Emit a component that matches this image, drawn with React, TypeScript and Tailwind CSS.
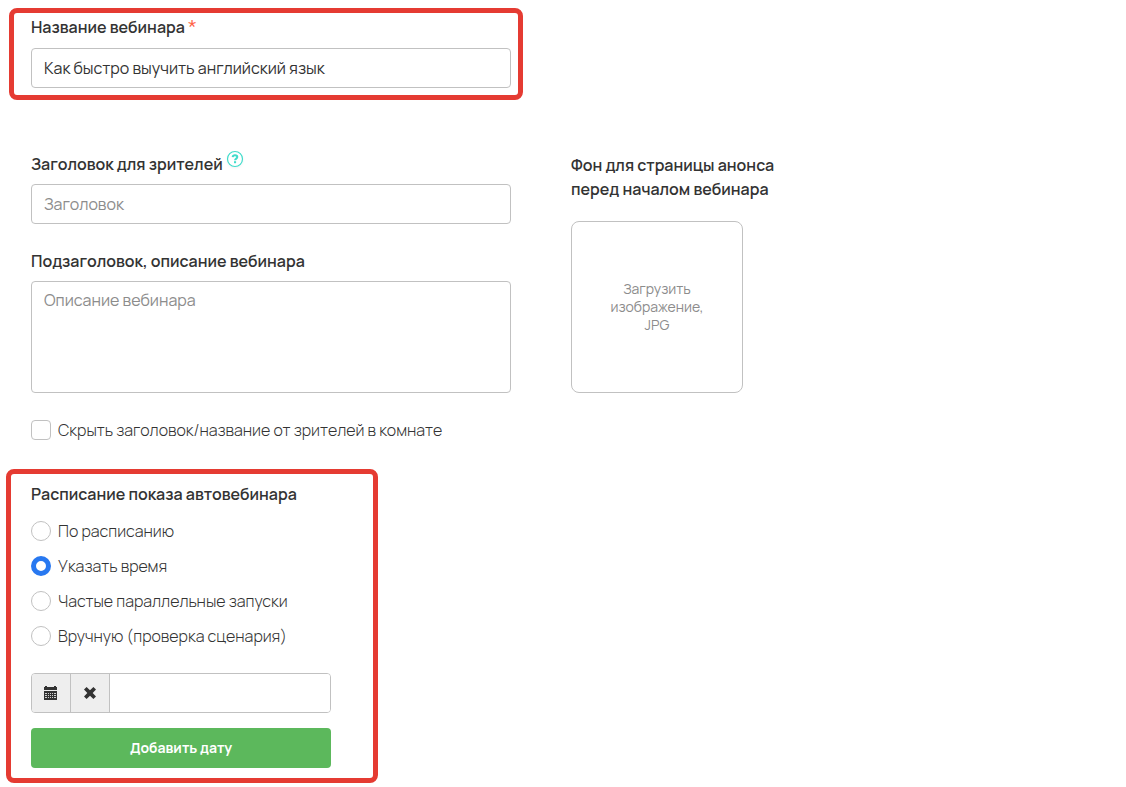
import { useState } from "react";

const fieldClass =
  "block w-full rounded border border-[#c1c1c1] bg-white px-3 text-base font-normal text-[#333] placeholder:text-[#8c8c8c] placeholder:opacity-100";
const labelClass = "text-base leading-6 font-semibold text-[#333]";

const modes = [
  "По расписанию",
  "Указать время",
  "Частые параллельные запуски",
  "Вручную (проверка сценария)",
];

function CalendarIcon() {
  return (
    <svg width="14" height="14" viewBox="0 0 14 14" aria-hidden="true" shapeRendering="crispEdges">
      <path fill="#333" d="M0 1h1V0h2v1h7V0h2v1h1v3H0zM0 5h13v9H0z" />
      <path
        fill="#d0d0d0"
        d="M1 7h2v1H1zM4 7h1v1H4zM6 7h1v1H6zM8 7h1v1H8zM10 7h2v1h-2zM1 9h2v1H1zM4 9h1v1H4zM6 9h1v1H6zM8 9h1v1H8zM10 9h2v1h-2zM1 11h2v1H1zM4 11h1v1H4zM6 11h1v1H6zM8 11h1v1H8zM10 11h2v1h-2z"
      />
    </svg>
  );
}

function RemoveIcon() {
  return (
    <svg width="14" height="14" viewBox="0 0 14 14" aria-hidden="true">
      <path
        fill="#333"
        d="M3.6 1 7 4.3 10.4 1 13 3.5 9.7 7l3.3 3.5-2.6 2.5L7 9.7 3.6 13 1 10.5 4.3 7 1 3.5z"
      />
    </svg>
  );
}

function HelpIcon() {
  return (
    <svg width="18" height="18" viewBox="0 0 18 18" fill="none" aria-hidden="true" className="drop-shadow-xs">
      <circle cx="9" cy="9" r="7.5" fill="#fff" stroke="#40dccb" strokeWidth="1.2" />
      <path d="M6.7 7.2C6.8 5.9 7.7 5.3 9 5.3c1.4 0 2.3.7 2.3 1.8 0 1.5-2.2 1.5-2.2 3.2" stroke="#40dccb" strokeWidth="2" />
      <path d="M8 11.2h2.1v2H8z" fill="#40dccb" />
    </svg>
  );
}

export default function App() {
  const [title, setTitle] = useState("Как быстро выучить английский язык");
  const [mode, setMode] = useState(1);

  return (
    <form
      className="flex flex-col bg-white pt-2 text-[#333] font-['Manrope','Inter',sans-serif]"
      onSubmit={(e) => e.preventDefault()}
    >
      <section className="ml-[9px] w-full max-w-[514px] rounded-lg border-5 border-[#e53b32] pt-0.5 pr-[7px] pb-[7px] pl-[17px]">
        <label htmlFor="title" className={`${labelClass} flex h-6 items-start gap-[3px]`}>
          Название вебинара
          <span className="pt-px text-[22px] leading-6 font-light text-[#ff6347]">*</span>
        </label>
        <input
          id="title"
          className={`${fieldClass} mt-[9px] h-10`}
          value={title}
          onChange={(e) => setTitle(e.target.value)}
        />
      </section>

      <div className="mt-[52px] flex flex-wrap gap-x-[60px] gap-y-6 pl-[31px]">
        <div className="flex w-full max-w-[480px] flex-col">
          <div className="flex h-6 items-start gap-[3px]">
            <label htmlFor="heading" className={labelClass}>
              Заголовок для зрителей
            </label>
            <button type="button" aria-label="Подсказка" className="-mt-0.5">
              <HelpIcon />
            </button>
          </div>
          <input id="heading" placeholder="Заголовок" className={`${fieldClass} mt-2 h-10`} />
          <label htmlFor="description" className={`${labelClass} mt-[25px]`}>
            Подзаголовок, описание вебинара
          </label>
          <textarea
            id="description"
            placeholder="Описание вебинара"
            className={`${fieldClass} mt-2 h-28 resize-none py-1.5`}
          />
          <label className="mt-[25px] flex items-center gap-[7px] text-base leading-6 font-light">
            <input
              type="checkbox"
              className="size-5 shrink-0 appearance-none rounded border border-[#c1c1c1] bg-white checked:bg-[#2878f0]"
            />
            Скрыть заголовок/название от зрителей в комнате
          </label>
        </div>

        <div className="flex flex-col items-start pt-px">
          <span className={labelClass}>
            Фон для страницы анонса
            <br />
            перед началом вебинара
          </span>
          <button
            type="button"
            className="mt-5 flex size-[172px] items-center justify-center rounded-lg border border-[#c1c1c1] px-8 text-center text-sm leading-[18px] font-normal text-[#8c8c8c]"
          >
            Загрузить изображение, JPG
          </button>
        </div>
      </div>

      <section className="mt-[27px] ml-1.5 flex w-full max-w-[372px] flex-col rounded-lg border-5 border-[#e53b32] pt-2 pr-[42px] pb-2.5 pl-5">
        <fieldset>
          <legend className={labelClass}>Расписание показа автовебинара</legend>
          <div className="mt-[13px] flex flex-col gap-[11px]">
            {modes.map((name, i) => (
              <label key={name} className="flex items-center gap-[7px] text-base leading-6 font-light">
                <input
                  type="radio"
                  name="mode"
                  checked={mode === i}
                  onChange={() => setMode(i)}
                  className="size-5 shrink-0 appearance-none rounded-full border border-[#c1c1c1] bg-white checked:border-5 checked:border-[#2878f0]"
                />
                {name}
              </label>
            ))}
          </div>
        </fieldset>

        <div className="mt-[25px] flex h-10 overflow-hidden rounded border border-[#c1c1c1]">
          <button
            type="button"
            aria-label="Выбрать дату"
            className="flex w-[39px] items-center justify-center border-r border-[#c1c1c1] bg-[#eee]"
          >
            <CalendarIcon />
          </button>
          <button
            type="button"
            aria-label="Очистить дату"
            className="flex w-[39px] items-center justify-center border-r border-[#c1c1c1] bg-[#eee]"
          >
            <RemoveIcon />
          </button>
          <input aria-label="Дата показа" className="min-w-0 flex-1 bg-white px-3 font-normal" />
        </div>
        <button type="submit" className="mt-[15px] h-10 rounded bg-[#5cb85c] text-sm font-bold text-white">
          Добавить дату
        </button>
      </section>
    </form>
  );
}
